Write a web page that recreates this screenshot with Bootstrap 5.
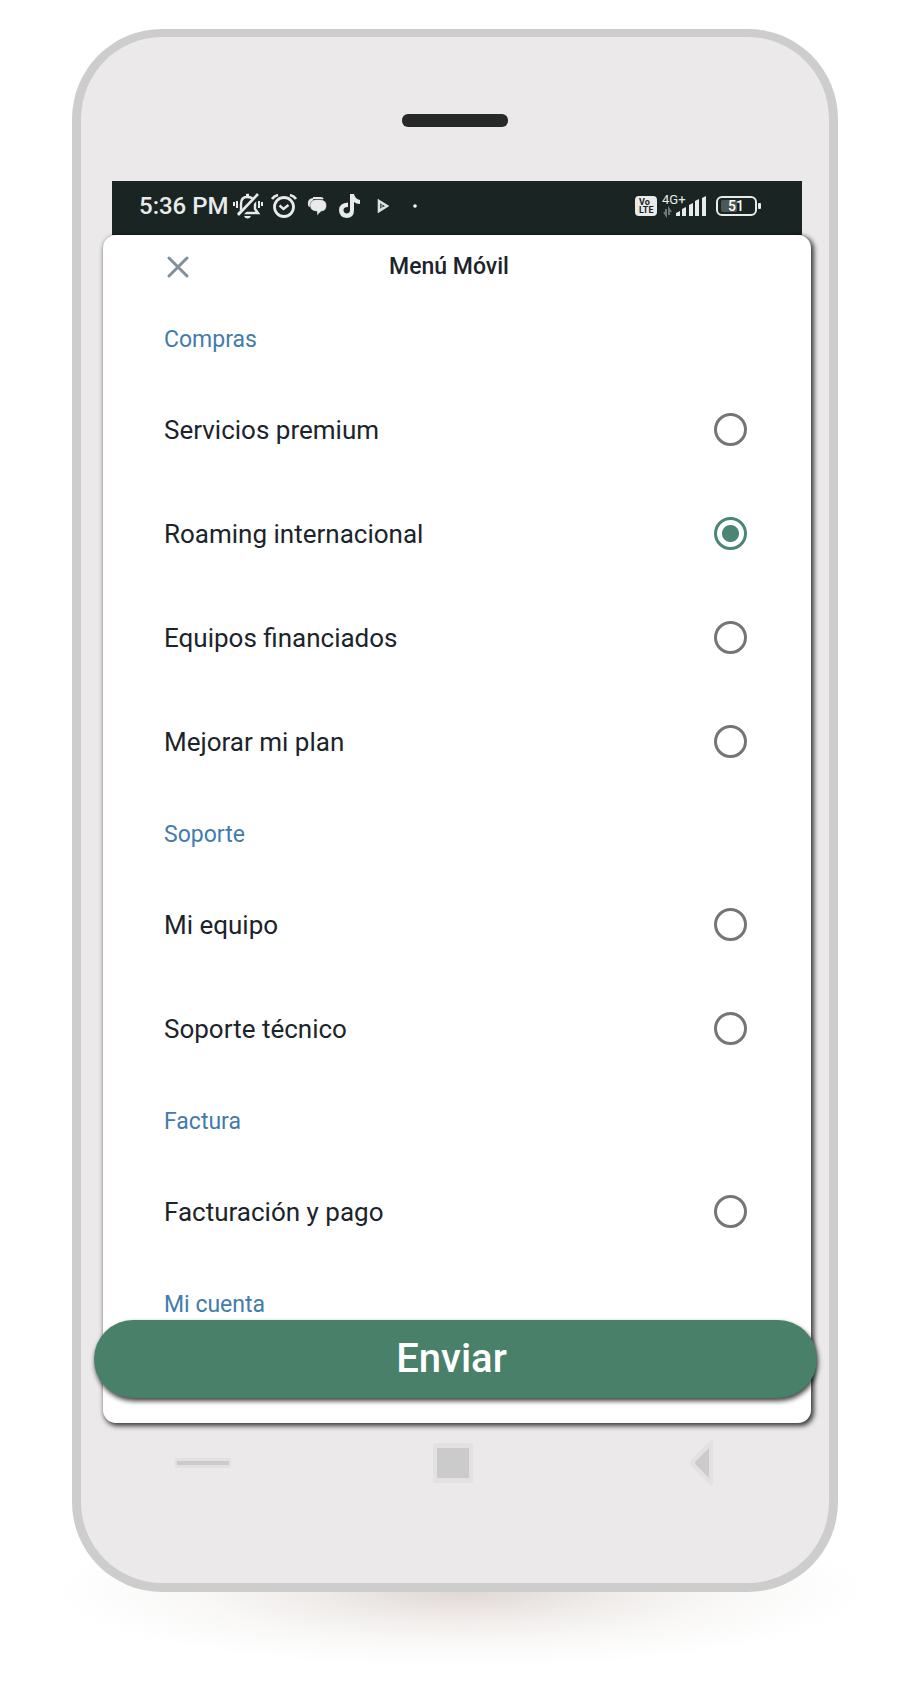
<!DOCTYPE html>
<html lang="es">
<head>
<meta charset="utf-8">
<meta name="viewport" content="width=device-width, initial-scale=1">
<title>Menú Móvil</title>
<link href="https://cdn.jsdelivr.net/npm/bootstrap@5.3.0/dist/css/bootstrap.min.css" rel="stylesheet">
<style>
  body { font-family: Roboto, "Liberation Sans", sans-serif; background: #fff; color: #1c242b; }
  .stage { padding: 29px 85px 100px 72px; isolation: isolate; }
  .floor-shadow { left: 6%; right: 6%; bottom: 24px; height: 156px; z-index: -1;
    background: radial-gradient(closest-side, #dfd7d3 0%, #efebe9 35%, #f9f8f7 65%, #fff 100%); }
  .phone { background: #ebe9ea; border: 9px solid #cdcdcd; border-top-width: 8px; border-radius: 90px;
    padding: 77px 18px 97px 22px; }
  .speaker { width: 106px; height: 13px; border-radius: 6px; background: #262928; margin-left: 299px; }
  .statusbar { height: 54px; margin: 54px 9px 0 9px; padding: 0 40px 4px 27px; background: #192423; color: #e8ebe9; }
  .statusbar svg { display: block; flex: none; }
  .clock { font-size: 24px; line-height: 28px; font-weight: 500; }
  .icon-alarm { margin-left: 7px; }
  .icon-chat { margin-left: 9px; }
  .icon-signal { margin-left: 5px; overflow: visible; }
  .sheet { background: #fff; border-radius: 13px; box-shadow: 2px 2px 5px 1px rgba(0,0,0,.75); padding-bottom: 25px; }
  .sheet-head { height: 63px; padding: 0 78px 0 62px; display: grid; grid-template-columns: 1fr auto 1fr; align-items: center; }
  .sheet-head h1 { font-size: 23px; line-height: 28px; font-weight: 500; margin: 0; }
  .close-x { border: 0; background: none; padding: 0 2px; justify-self: start; line-height: 0; }
  .group { border: 0; margin: 0; padding: 0 64px 0 61px; }
  .group-title { height: 79px; font-size: 23px; line-height: 28px; padding-top: 28px; color: #437cab; margin: 0; float: none; }
  .option { height: 104px; font-size: 26px; line-height: 32px; }
  .option label { padding-top: 2px; }
  .option .form-check-input { width: 33px; height: 33px; margin: 0; border: 3px solid #757575; background: #fff; flex: none; box-shadow: none; }
  .option .form-check-input:checked { border-color: #4a8575;
    background: radial-gradient(circle, #4a8575 8px, #fff 9px); }
  .send { display: block; position: relative; height: 78px; margin: -22px -6px 0 -9px; border: 0; border-radius: 39px;
    background: #49806a; color: #fff; font-size: 40px; line-height: 78px; font-weight: 500; padding: 0 8px 0 0;
    box-shadow: 1px 3px 5px rgba(0,0,0,.75); }
  .softkeys { padding: 17px 97px 0 72px; height: 63px; display: grid; grid-template-columns: 1fr auto 1fr; }
  .softkeys button { border: 0; background: none; padding: 0; line-height: 0; justify-self: start; }
  .softkeys button:last-child { justify-self: end; }
</style>
</head>
<body>
<main class="stage position-relative">
  <div class="floor-shadow position-absolute"></div>
  <div class="phone">
    <div class="speaker"></div>

    <div class="statusbar d-flex align-items-center justify-content-between">
      <div class="d-flex align-items-center">
        <span class="clock">5:36 PM</span>
        <svg class="ms-1" width="30" height="26" viewBox="0 0 30 26" fill="none" stroke="#e8ebe9" stroke-width="2" aria-hidden="true">
          <path d="M8 18V11Q8 4 14 4Q20 4 22 9V16L25 20H11M5 21L8 18" stroke-width="2.4"/>
          <path d="M13 2H16" stroke-width="2.4"/>
          <path d="M26 2L4 25" stroke="#192423" stroke-width="5"/>
          <path d="M25 1L5 22" stroke-width="2.6"/>
          <path d="M11 23H18Q17 25.500 14.500 25.500Q12 25.500 11 23Z" fill="#e8ebe9" stroke="none"/>
          <path d="M4 8V15M1 9V13M26 8V15M29 9V13"/>
        </svg>
        <svg class="icon-alarm" width="28" height="26" viewBox="0 0 28 26" fill="none" stroke="#e8ebe9" aria-hidden="true">
          <circle cx="14" cy="14" r="9.500" stroke-width="2.800"/>
          <path d="M2 6Q4 3 8 2M26 6Q24 3 20 2" stroke-width="2.800"/>
          <path d="M9.500 12.500L13.500 16L18.500 12" stroke-width="2.400"/>
        </svg>
        <svg class="icon-chat" width="20" height="20" viewBox="0 0 20 20" aria-hidden="true">
          <path d="M6 2H13Q15 2 16 3" fill="none" stroke="#e8ebe9" stroke-width="2"/>
          <path d="M1 9Q0 2 7 2L4 9L3 11Q1 11 1 9Z" fill="#e8ebe9"/>
          <path d="M9 3.500H13Q19.500 4 19.500 9.500Q19.500 15 14 15.500L10 19.500V15.500Q3 15 3 9.500Q3 4 9 3.500Z" fill="#e8ebe9" stroke="#192423" stroke-width="0.400"/>
        </svg>
        <svg class="ms-2 ps-1" width="26" height="24" viewBox="0 0 22 24" aria-hidden="true">
          <path d="M11 0H15Q16 5 21 6V10Q17 10 15 8V16Q15 24 7.500 24Q0 23 0 16Q0 9 9 8.500V13Q4 13 4.500 16.500Q5 19.500 8 19.500Q11 19 11 16Z" fill="#e8ebe9"/>
        </svg>
        <svg class="ms-3" width="12" height="14" viewBox="0 0 12 14" fill="none" stroke="#dde2e0" stroke-width="2.600" aria-hidden="true">
          <path d="M2 2L10 7L2 12Z"/><path d="M5 5V9" stroke-width="1"/>
        </svg>
        <svg class="ms-4" width="4" height="4" viewBox="0 0 4 4" aria-hidden="true"><circle cx="2" cy="2" r="1.800" fill="#fff"/></svg>
      </div>
      <div class="d-flex align-items-center">
        <svg width="22" height="20" viewBox="0 0 22 20" font-family="Roboto, sans-serif" font-weight="700" fill="#192423" aria-label="VoLTE">
          <rect width="22" height="20" rx="4" fill="#e8ebe9"/>
          <text x="4" y="9" font-size="9">Vo</text><text x="4" y="17" font-size="9">LTE</text>
        </svg>
        <svg class="icon-signal" width="46" height="24" viewBox="0 0 46 24" fill="#e8ebe9" aria-label="4G+">
          <text x="0" y="10" font-size="13" font-family="Roboto, sans-serif">4G+</text>
          <path d="M4 15V21L2 18M7 21V15L9 18" fill="none" stroke="#6d7775" stroke-width="2"/>
          <path d="M14 22V19L18 17V22ZM20 22V15L24 13V22ZM27 22V11L31 9V22ZM33 22V7L37 5V22ZM40 22V4L44 2V22Z"/>
        </svg>
        <svg class="ms-2" width="46" height="20" viewBox="0 0 46 20" aria-label="Batería 51">
          <rect x="1" y="1" width="39" height="18" rx="5" fill="none" stroke="#e8ebe9" stroke-width="2"/>
          <rect x="5" y="4" width="16" height="12" rx="2" fill="#4d5755"/>
          <rect x="42" y="7" width="3" height="6" rx="1" fill="#e8ebe9"/>
          <text x="20" y="15" text-anchor="middle" font-size="14" font-weight="500" font-family="Roboto, sans-serif" fill="#fff">51</text>
        </svg>
      </div>
    </div>

    <form class="sheet">
      <header class="sheet-head">
        <button type="button" class="close-x" aria-label="Cerrar">
          <svg width="22" height="22" viewBox="0 0 22 22" fill="none" stroke="#7f909c" stroke-width="3" stroke-linecap="round"><path d="M2 2L20 20M20 2L2 20"/></svg>
        </button>
        <h1>Menú Móvil</h1>
      </header>

      <fieldset class="group">
        <legend class="group-title">Compras</legend>
        <div class="option d-flex align-items-center justify-content-between"><label for="o1">Servicios premium</label><input class="form-check-input" type="radio" name="menu" id="o1"></div>
        <div class="option d-flex align-items-center justify-content-between"><label for="o2">Roaming internacional</label><input class="form-check-input" type="radio" name="menu" id="o2" checked></div>
        <div class="option d-flex align-items-center justify-content-between"><label for="o3">Equipos financiados</label><input class="form-check-input" type="radio" name="menu" id="o3"></div>
        <div class="option d-flex align-items-center justify-content-between"><label for="o4">Mejorar mi plan</label><input class="form-check-input" type="radio" name="menu" id="o4"></div>
      </fieldset>
      <fieldset class="group">
        <legend class="group-title">Soporte</legend>
        <div class="option d-flex align-items-center justify-content-between"><label for="o5">Mi equipo</label><input class="form-check-input" type="radio" name="menu" id="o5"></div>
        <div class="option d-flex align-items-center justify-content-between"><label for="o6">Soporte técnico</label><input class="form-check-input" type="radio" name="menu" id="o6"></div>
      </fieldset>
      <fieldset class="group">
        <legend class="group-title">Factura</legend>
        <div class="option d-flex align-items-center justify-content-between"><label for="o7">Facturación y pago</label><input class="form-check-input" type="radio" name="menu" id="o7"></div>
      </fieldset>
      <fieldset class="group">
        <legend class="group-title">Mi cuenta</legend>
      </fieldset>
      <div class="d-grid"><button type="submit" class="send">Enviar</button></div>
    </form>

    <nav class="softkeys">
      <button type="button" aria-label="Menú"><svg width="56" height="46" viewBox="0 0 56 46"><rect y="18" width="56" height="10" rx="1" fill="#e3e2e1"/><rect x="2" y="21" width="52" height="4" fill="#cbcbcb"/></svg></button>
      <button type="button" class="ms-3" aria-label="Inicio"><svg width="40" height="46" viewBox="0 0 40 46"><rect y="3" width="40" height="40" rx="2" fill="#e3e2e1"/><rect x="4" y="8" width="32" height="30" fill="#cbcbcb"/></svg></button>
      <button type="button" aria-label="Atrás"><svg width="24" height="46" viewBox="0 0 24 46"><path d="M2 19L20 1Q23 -1 23 2V44Q23 47 20 45L2 27Q-2 23 2 19Z" fill="#e3e2e1"/><path d="M19 8V38L6 25Q4 23 6 21Z" fill="#cbcbcb"/></svg></button>
    </nav>
  </div>
</main>
<script src="https://cdn.jsdelivr.net/npm/bootstrap@5.3.0/dist/js/bootstrap.bundle.min.js"></script>
</body>
</html>
